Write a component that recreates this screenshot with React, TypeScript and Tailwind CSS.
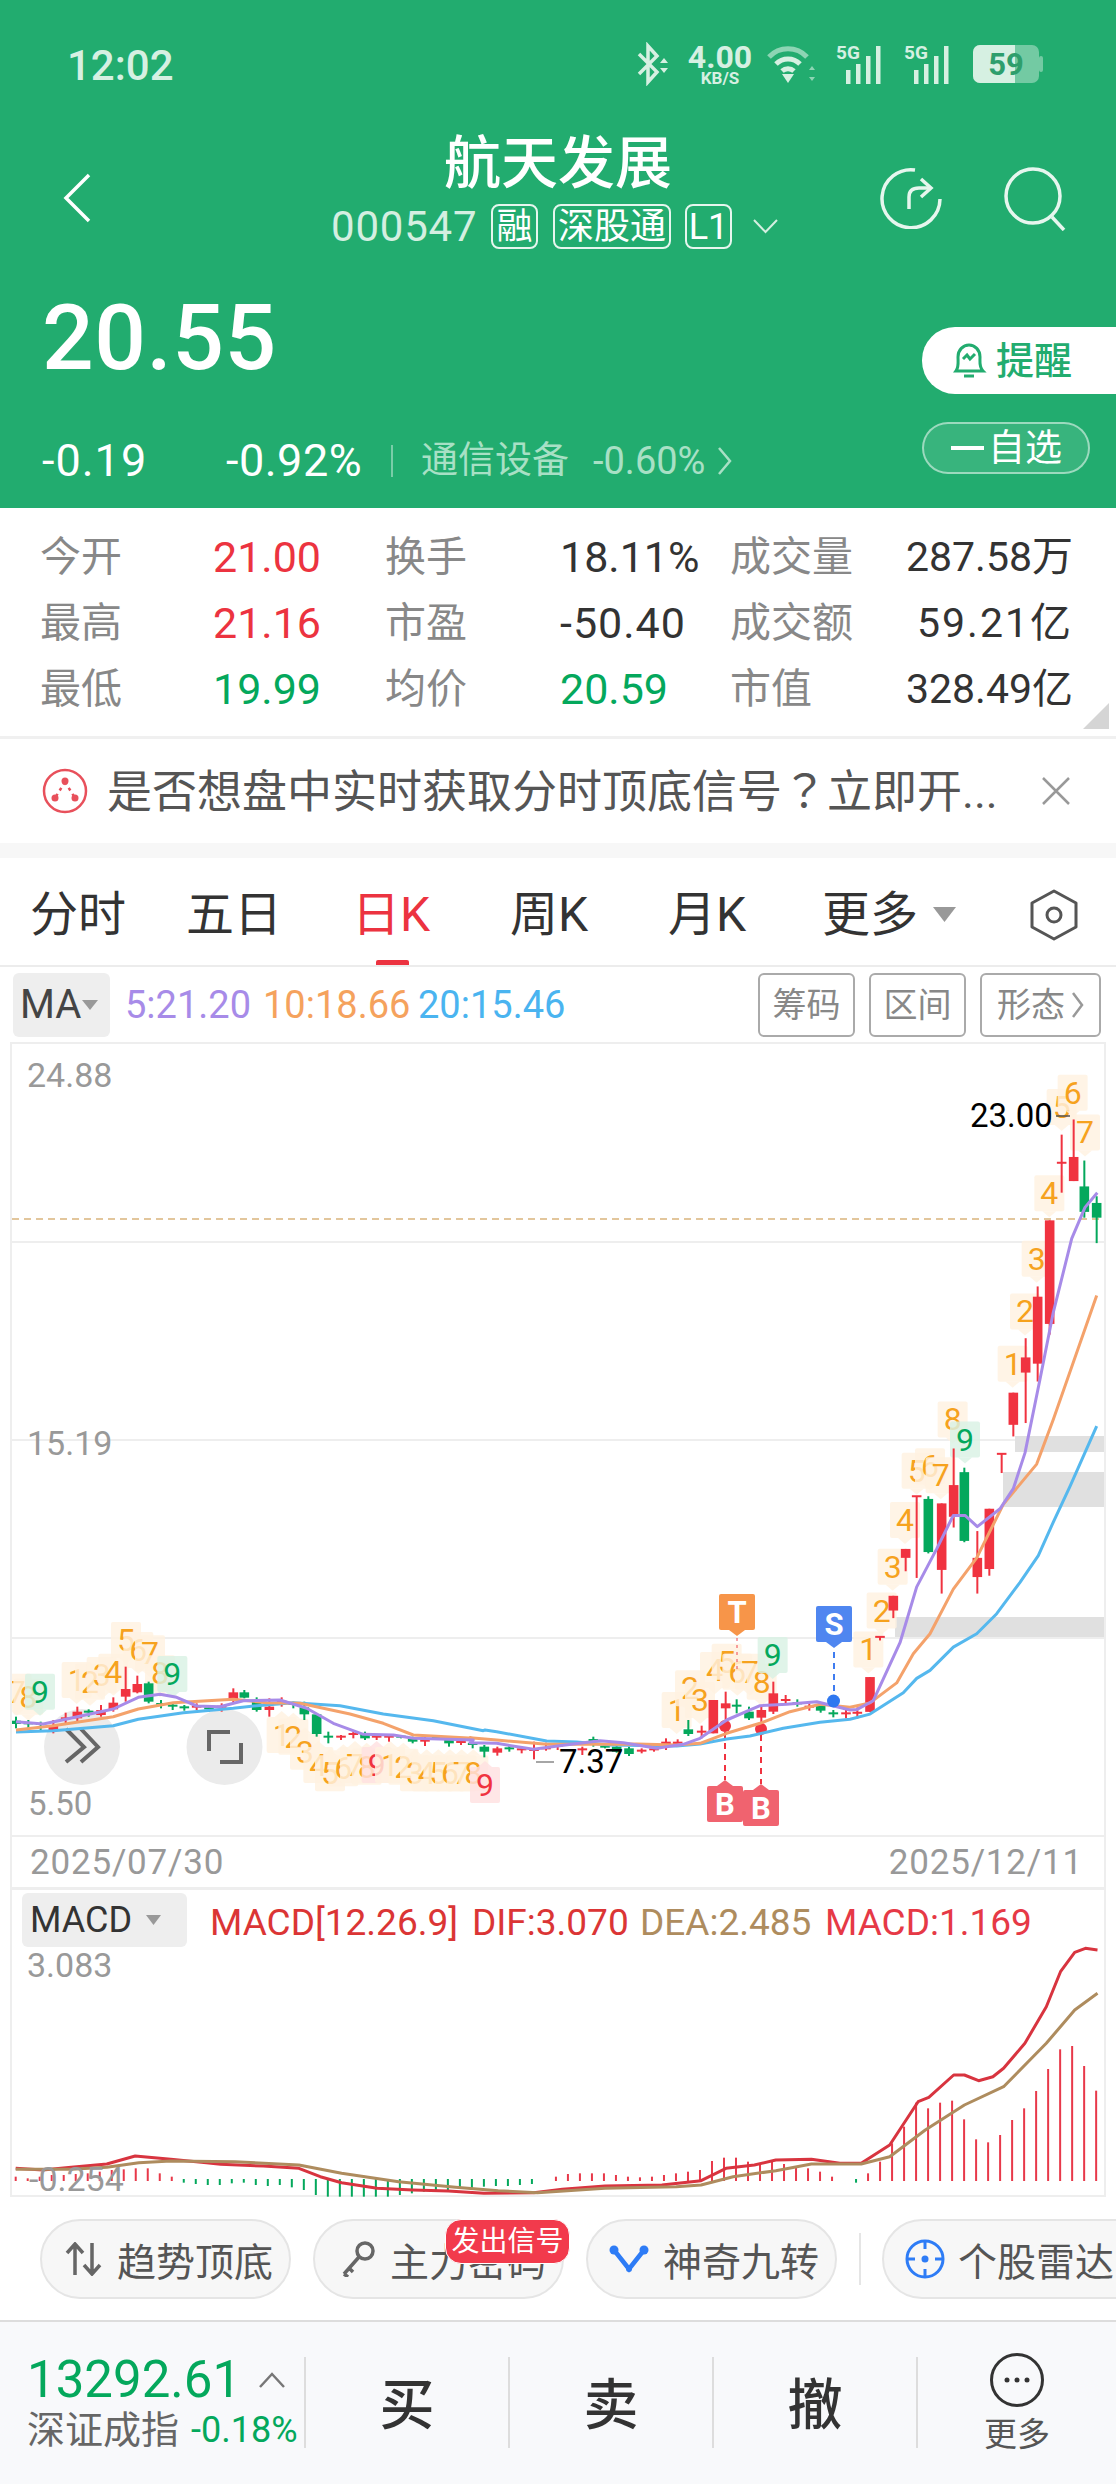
import React from "react";

// page-coordinate helpers, the chart data was read off zoomed crops
const z3 = (x: number, y: number) => [700 + x / 3, 1040 + y / 2.24];
const z4 = (x: number, y: number) => [x / 3, 1560 + y / 3];
const z5 = (x: number, y: number) => [450 + x / 3, 1560 + y / 3];
const z6 = (x: number, y: number) => [x / 1.405, 1860 + y / 3];

type Conv = (x: number, y: number) => number[];
type Candle = [number, number, number, number, number, "r" | "g"];

const RED = "#F03340";
const GREEN = "#04A85C";

const candles4: Candle[] = [
  [48, 482, 492, 470, 505, "g"], [85, 490, 490, 480, 505, "g"], [122, 492, 492, 485, 510, "g"],
  [160, 496, 510, 480, 520, "r"], [197, 475, 475, 458, 490, "r"], [232, 455, 475, 440, 485, "r"],
  [266, 455, 455, 448, 470, "g"], [303, 450, 465, 435, 470, "r"], [340, 428, 448, 412, 455, "r"],
  [377, 387, 410, 320, 425, "r"], [412, 372, 397, 347, 400, "r"], [446, 370, 425, 365, 430, "g"],
  [483, 432, 432, 420, 445, "g"], [518, 437, 437, 430, 450, "g"], [553, 442, 442, 435, 452, "g"],
  [590, 440, 440, 430, 450, "r"], [627, 445, 445, 435, 455, "g"], [665, 440, 440, 430, 455, "r"],
  [700, 397, 420, 385, 430, "r"], [733, 397, 413, 390, 415, "g"], [770, 425, 450, 412, 455, "g"],
  [808, 440, 450, 415, 470, "r"], [845, 425, 425, 412, 440, "r"], [880, 432, 432, 425, 445, "g"],
  [913, 442, 463, 425, 480, "g"], [950, 463, 522, 460, 530, "g"], [985, 530, 530, 515, 550, "g"],
  [1023, 530, 530, 525, 540, "r"], [1060, 522, 522, 515, 535, "r"], [1095, 520, 535, 515, 540, "g"],
  [1130, 530, 535, 525, 540, "r"], [1167, 530, 535, 525, 545, "r"], [1203, 530, 530, 525, 535, "g"],
  [1238, 535, 545, 530, 550, "g"], [1275, 538, 545, 530, 558, "r"], [1310, 532, 532, 528, 538, "g"],
  [1347, 540, 550, 535, 560, "g"], [1383, 546, 546, 535, 555, "r"], [1418, 552, 552, 545, 565, "g"],
];

const candles5: Candle[] = [
  [103, 560, 575, 555, 592, "g"], [142, 565, 578, 560, 587, "r"], [178, 565, 565, 558, 575, "g"],
  [215, 568, 568, 560, 580, "r"], [252, 570, 570, 545, 598, "r"], [288, 565, 570, 548, 572, "r"],
  [323, 558, 558, 550, 570, "r"], [397, 568, 568, 560, 585, "r"], [430, 540, 540, 530, 560, "g"],
  [465, 560, 560, 555, 565, "g"], [500, 560, 575, 558, 578, "g"], [537, 565, 582, 560, 588, "g"],
  [575, 572, 572, 565, 580, "r"], [612, 568, 568, 560, 575, "r"], [648, 545, 555, 535, 570, "r"],
  [683, 545, 552, 538, 560, "r"], [715, 508, 522, 480, 528, "g"], [755, 515, 515, 497, 535, "r"],
  [790, 420, 520, 420, 520, "r"], [827, 430, 445, 395, 490, "r"], [860, 437, 437, 418, 460, "g"],
  [897, 455, 475, 440, 480, "g"], [934, 450, 473, 440, 520, "r"], [970, 400, 455, 365, 462, "r"],
  [1007, 420, 420, 405, 435, "r"], [1042, 430, 430, 418, 440, "g"], [1078, 440, 440, 430, 452, "r"],
  [1112, 438, 452, 428, 458, "g"], [1150, 460, 460, 450, 472, "g"], [1188, 460, 460, 445, 475, "r"],
];

const candles3: Candle[] = [
  [472, 1507, 1507, 1495, 1520, "r"], [510, 1427, 1505, 1427, 1505, "r"], [540, 1337, 1337, 1337, 1345, "r"],
  [580, 1245, 1278, 1245, 1295, "r"], [617, 1140, 1160, 1140, 1190, "r"], [650, 1022, 1022, 1022, 1205, "r"],
  [685, 1028, 1147, 1022, 1150, "g"], [725, 1038, 1187, 1038, 1240, "r"], [761, 997, 1068, 915, 1092, "r"],
  [793, 968, 1122, 958, 1125, "g"], [832, 1160, 1203, 1100, 1240, "r"], [868, 1050, 1185, 1050, 1200, "r"],
  [905, 927, 927, 927, 970, "r"], [940, 790, 862, 790, 888, "r"], [977, 711, 745, 668, 858, "r"],
  [1013, 575, 725, 552, 765, "r"], [1049, 404, 636, 404, 660, "r"], [1085, 275, 275, 212, 342, "r"],
  [1121, 262, 316, 178, 316, "r"], [1153, 328, 385, 270, 398, "g"], [1190, 365, 398, 350, 455, "g"],
];

const toPoints = (list: number[][], conv: Conv) =>
  list.map(([x, y]) => conv(x, y).map((v) => v.toFixed(1)).join(",")).join(" ");

const blue =
  toPoints([[48, 516], [160, 512], [340, 497], [415, 478], [550, 458], [700, 445], [770, 437], [880, 428], [1020, 437], [1150, 462], [1300, 482], [1450, 512]], z4) + " " +
  toPoints([[105, 510], [140, 515], [290, 543], [380, 546], [480, 555], [680, 558], [750, 552], [830, 537], [900, 528], [1000, 505], [1110, 487], [1200, 478]], z5) + " " +
  toPoints([[510, 1510], [610, 1462], [650, 1430], [690, 1412], [760, 1360], [830, 1330], [890, 1285], [960, 1215], [1015, 1155], [1060, 1080], [1110, 1000], [1190, 865]], z3);

const orange =
  toPoints([[48, 510], [160, 497], [340, 470], [415, 447], [520, 428], [700, 418], [800, 428], [900, 430], [1050, 462], [1150, 490], [1240, 525], [1420, 535]], z4) + " " +
  toPoints([[60, 533], [140, 540], [290, 553], [430, 553], [560, 552], [680, 555], [750, 550], [830, 520], [930, 490], [1020, 455], [1110, 433], [1200, 442]], z5) + " " +
  toPoints([[510, 1485], [590, 1440], [640, 1375], [690, 1330], [760, 1230], [830, 1160], [910, 1040], [1010, 950], [1060, 850], [1190, 572]], z3);

const purple =
  toPoints([[48, 485], [130, 492], [232, 470], [340, 447], [415, 412], [480, 403], [530, 412], [590, 438], [660, 440], [730, 422], [840, 420], [920, 445], [1000, 490], [1090, 523], [1180, 525], [1240, 535], [1420, 540]], z4) + " " +
  toPoints([[60, 548], [140, 550], [250, 568], [340, 556], [450, 542], [520, 548], [620, 565], [700, 553], [750, 535], [830, 480], [930, 437], [1010, 433], [1100, 425], [1200, 450]], z5) + " " +
  toPoints([[470, 1500], [520, 1480], [600, 1350], [650, 1225], [710, 1140], [760, 1065], [795, 1065], [832, 1090], [900, 1050], [940, 1005], [975, 925], [1020, 760], [1060, 610], [1115, 445], [1155, 375], [1192, 342]], z3);

const dif = toPoints([[22, 925], [60, 930], [100, 922], [150, 912], [190, 888], [240, 898], [290, 908], [310, 913], [370, 918], [420, 925], [450, 950], [480, 968], [530, 985], [580, 990], [630, 993], [680, 1000], [750, 998], [790, 988], [850, 978], [930, 975], [985, 962], [1020, 925], [1060, 915], [1090, 900], [1140, 898], [1180, 910], [1210, 910], [1250, 855], [1290, 725], [1305, 712], [1340, 645], [1355, 645], [1375, 662], [1395, 650], [1410, 625], [1440, 550], [1470, 440], [1490, 335], [1510, 277], [1525, 265], [1542, 270]], z6);
const dea = toPoints([[22, 928], [100, 928], [150, 922], [195, 908], [240, 903], [330, 905], [420, 915], [480, 940], [560, 965], [640, 982], [700, 992], [755, 998], [850, 985], [950, 980], [985, 975], [1030, 950], [1090, 932], [1140, 912], [1210, 912], [1250, 890], [1300, 810], [1355, 735], [1410, 680], [1470, 550], [1510, 450], [1542, 400]], z6);

// macd bars by index, values are the free end of each bar in crop pixels
const redBars: [number, number][] = [
  ...[950, 955, 950, 945, 945, 942, 940, 935, 930, 928, 925, 925, 940, 950].map((t, i) => [i, t] as [number, number]),
  ...[950, 942, 940, 940, 940, 945, 950, 952, 950, 945, 940, 935, 930, 903, 893, 893, 905, 915, 905, 912, 920, 925, 935, 950].map((t, i) => [i + 45, t] as [number, number]),
  ...[940, 905, 850, 800, 728, 745, 728, 722, 778, 838, 847, 825, 780, 745, 693, 627, 568, 558, 618, 692].map((t, i) => [i + 71, t] as [number, number]),
];
const greenBars: [number, number][] = [
  ...[968, 972, 975, 975, 970, 968, 975, 978, 975, 982, 990, 1005, 1010, 1010, 1010, 1010, 1010, 1010, 1005, 1000, 995, 990, 990, 985, 985, 980, 978, 978, 975, 972].map((b, i) => [i + 14, b] as [number, number]),
  [70, 968],
];

// sequence tiles stack translucently, so older digits fade under newer ones
type Td = [number, number, number];
const tdUp4: Td[] = [
  [7, 50, 395], [8, 85, 410], [1, 230, 360], [2, 270, 365], [3, 305, 345], [4, 340, 335],
  [5, 378, 240], [6, 415, 270], [7, 450, 280], [8, 480, 340],
];
const tdDown4: Td[] = [
  [1, 845, 525], [2, 880, 530], [3, 915, 575], [4, 955, 615], [5, 990, 640], [6, 1030, 625],
  [7, 1065, 615], [8, 1100, 620], [1, 1170, 615], [2, 1210, 620], [3, 1245, 640], [4, 1280, 640],
  [5, 1315, 640], [6, 1350, 640], [7, 1385, 640], [8, 1420, 640],
];
const tdUp5: Td[] = [
  [1, 680, 450], [2, 720, 385], [3, 750, 420], [4, 795, 330], [5, 830, 305], [6, 862, 335], [7, 900, 335], [8, 935, 365],
];
const tdUp3: Td[] = [
  [1, 505, 1365], [2, 545, 1278], [3, 578, 1180], [4, 615, 1075], [5, 650, 965], [6, 690, 955], [7, 722, 975],
  [8, 758, 850], [1, 938, 725], [2, 975, 608], [3, 1010, 490], [4, 1048, 343], [5, 1085, 150], [6, 1118, 118], [7, 1155, 207],
];

function Tile({ n, x, y, fill, color, below }: { n: number; x: number; y: number; fill: string; color: string; below?: boolean }) {
  const notch = below
    ? `M${x - 7} ${y - 18} L${x} ${y - 24} L${x + 7} ${y - 18} Z`
    : `M${x - 7} ${y + 18} L${x} ${y + 24} L${x + 7} ${y + 18} Z`;
  return (
    <g>
      <rect x={x - 15} y={y - 18} width={30} height={36} rx={2} fill={fill} fillOpacity={0.82} />
      <path d={notch} fill={fill} fillOpacity={0.82} />
      <text x={x} y={y + 11} textAnchor="middle" fontSize={32} fill={color}>{n}</text>
    </g>
  );
}

function Tiles({ list, conv, below }: { list: Td[]; conv: Conv; below?: boolean }) {
  return (
    <>
      {list.map(([n, zx, zy], i) => {
        const [x, y] = conv(zx, zy);
        return <Tile key={i} n={n} x={x} y={y} fill="#FFF1E0" color="#F6A21E" below={below} />;
      })}
    </>
  );
}

function Candles({ list, conv }: { list: Candle[]; conv: Conv }) {
  return (
    <>
      {list.map(([zx, t, b, wt, wb, c], i) => {
        const [x, top] = conv(zx, t);
        const [, bot] = conv(zx, b);
        const [, wTop] = conv(zx, wt);
        const [, wBot] = conv(zx, wb);
        const color = c === "r" ? RED : GREEN;
        return (
          <g key={i}>
            <rect x={x - 1} y={wTop} width={2} height={wBot - wTop} fill={color} />
            <rect x={x - 4.8} y={top - (bot - top < 2 ? 1 : 0)} width={9.6} height={Math.max(bot - top, 2)} fill={color} />
          </g>
        );
      })}
    </>
  );
}

function Marker({ label, x, y, color, up }: { label: string; x: number; y: number; color: string; up?: boolean }) {
  const notch = up
    ? `M${x - 8} ${y - 18} L${x} ${y - 24} L${x + 8} ${y - 18} Z`
    : `M${x - 8} ${y + 18} L${x} ${y + 24} L${x + 8} ${y + 18} Z`;
  return (
    <g>
      <rect x={x - 18} y={y - 18} width={36} height={36} rx={2} fill={color} />
      <path d={notch} fill={color} />
      <text x={x} y={y + 11} textAnchor="middle" fontSize={31} fontWeight={700} fill="#fff">{label}</text>
    </g>
  );
}

function MainChart() {
  return (
    <svg width={1092} height={791} viewBox="12 1044 1092 791" className="block">
      {[1242, 1440, 1638].map((y) => (
        <line key={y} x1={12} x2={1104} y1={y} y2={y} stroke="#EEEEEE" strokeWidth={2} />
      ))}
      <rect x={1015} y={1436} width={89} height={16} fill="#E0E0E0" />
      <rect x={1003} y={1472} width={101} height={35} fill="#E0E0E0" />
      <rect x={895} y={1617} width={209} height={20} fill="#E0E0E0" />
      <line x1={12} x2={1104} y1={1219} y2={1219} stroke="#D9B47C" strokeWidth={1.5} strokeDasharray="7 5" />

      <text x={27} y={1087} fontSize={34} fill="#999">24.88</text>
      <text x={27} y={1455} fontSize={34} fill="#999">15.19</text>
      <text x={28} y={1815} fontSize={33} fill="#999">5.50</text>

      <circle cx={82} cy={1747} r={38} fill="#EBEBEB" />
      <path d="M66 1729 L84 1747 L66 1762 M81 1729 L98 1747 L81 1762" fill="none" stroke="#666" strokeWidth={4} />
      <circle cx={224.5} cy={1747} r={38} fill="#EBEBEB" />
      <path d="M209 1751 V1732 H230 M241 1743 V1762 H220" fill="none" stroke="#666" strokeWidth={4} />

      <Tiles list={tdUp4} conv={z4} />
      <Tile n={9} x={z4(120, 395)[0]} y={z4(120, 395)[1]} fill="#D9F2E4" color={GREEN} />
      <Tile n={9} x={z4(517, 342)[0]} y={z4(517, 342)[1]} fill="#D9F2E4" color={GREEN} />
      <Tiles list={tdDown4.slice(0, 8)} conv={z4} below />
      <Tile n={9} x={z4(1130, 615)[0]} y={z4(1130, 615)[1]} fill="#FFE0E1" color={RED} below />
      <Tiles list={tdDown4.slice(8)} conv={z4} below />
      <Tile n={9} x={z4(1455, 675)[0]} y={z4(1455, 675)[1]} fill="#FFE0E1" color={RED} below />
      <Tiles list={tdUp5} conv={z5} />
      <Tile n={9} x={z5(968, 285)[0]} y={z5(968, 285)[1]} fill="#D9F2E4" color={GREEN} />
      <Tiles list={tdUp3} conv={z3} />
      <Tile n={9} x={z3(795, 895)[0]} y={z3(795, 895)[1]} fill="#D9F2E4" color={GREEN} />

      <Candles list={candles4} conv={z4} />
      <Candles list={candles5} conv={z5} />
      <Candles list={candles3} conv={z3} />

      <line x1={737} x2={737} y1={1638} y2={1670} stroke={RED} strokeWidth={1.5} strokeDasharray="3 4" opacity={0.6} />
      <line x1={834} x2={834} y1={1652} y2={1692} stroke="#3F7CF0" strokeWidth={2} strokeDasharray="6 5" />
      <line x1={725} x2={725} y1={1732} y2={1780} stroke={RED} strokeWidth={2} strokeDasharray="6 5" />
      <line x1={761} x2={761} y1={1735} y2={1784} stroke={RED} strokeWidth={2} strokeDasharray="6 5" />
      <circle cx={725} cy={1726} r={6} fill={RED} />
      <circle cx={761} cy={1729} r={6} fill={RED} />

      <polyline points={blue} fill="none" stroke="#55B8EE" strokeWidth={3} strokeLinejoin="round" />
      <polyline points={orange} fill="none" stroke="#F4A26B" strokeWidth={3} strokeLinejoin="round" />
      <polyline points={purple} fill="none" stroke="#A78BE8" strokeWidth={3} strokeLinejoin="round" />
      <circle cx={833.5} cy={1701} r={6.5} fill="#2F78F0" />

      <Marker label="T" x={737} y={1612} color="#F79549" />
      <Marker label="S" x={834} y={1624} color="#4F86F0" />
      <Marker label="B" x={725} y={1804} color="#F0636F" up />
      <Marker label="B" x={761} y={1808} color="#F0636F" up />

      <line x1={536} x2={554} y1={1762} y2={1762} stroke="#888" strokeWidth={1.5} />
      <text x={559} y={1773} fontSize={33} fill="#000">7.37</text>
      <text x={970} y={1127} fontSize={33} fill="#000">23.00</text>
      <line x1={1056} x2={1070} y1={1116} y2={1116} stroke="#555" strokeWidth={1.5} />
    </svg>
  );
}

function MacdChart() {
  return (
    <svg width={1092} height={245} viewBox="12 1950 1092 245" className="block overflow-visible">
      {redBars.map(([i, t]) => {
        const x = 15.7 + 12.005 * i;
        const y = z6(0, t)[1];
        return <rect key={i} x={x - 1} y={y} width={2} height={2181 - y} fill="#E8394A" />;
      })}
      {greenBars.map(([i, b]) => {
        const x = 15.7 + 12.005 * i;
        const y = z6(0, b)[1];
        return <rect key={i} x={x - 1} y={2179} width={2} height={y - 2179} fill={GREEN} />;
      })}
      <polyline points={dif} fill="none" stroke="#D8343F" strokeWidth={3} strokeLinejoin="round" />
      <polyline points={dea} fill="none" stroke="#AE8C5E" strokeWidth={3} strokeLinejoin="round" />
      <text x={27} y={1977} fontSize={34} fill="#999">3.083</text>
      <text x={29} y={2191} fontSize={34} fill="#999">-0.254</text>
    </svg>
  );
}

function Signal5G() {
  return (
    <svg width={52} height={40} viewBox="0 0 52 40">
      <text x={0} y={15} fontSize={19} fontWeight={700} fill="#D6F0E2">5G</text>
      <rect x={10} y={26} width={4.5} height={14} fill="#D6F0E2" />
      <rect x={20} y={20} width={4.5} height={20} fill="#D6F0E2" />
      <rect x={30} y={12} width={4.5} height={28} fill="#D6F0E2" />
      <rect x={40} y={2} width={4.5} height={38} fill="#D6F0E2" />
    </svg>
  );
}

function StatusBar() {
  return (
    <div className="h-[126px] pl-[67px] pr-[73px] flex items-center">
      <span className="mt-[6px] text-[42px] leading-[50px] font-medium text-[#D6F0E2]">12:02</span>
      <div className="ml-auto mt-[2px] flex items-center">
        <svg width={34} height={44} viewBox="0 0 34 44" fill="none" stroke="#D6F0E2" strokeWidth={3.5}>
          <path d="M2 12 L20 30 L11 40 V4 L20 14 L2 32" />
          <path d="M27 16 L31 21 H23 Z M27 31 L31 26 H23 Z" fill="#D6F0E2" strokeWidth={0} />
        </svg>
        <div className="ml-[17px] w-[64px] flex flex-col items-center text-[#D6F0E2]">
          <span className="text-[32px] leading-[28px] font-bold">4.00</span>
          <span className="text-[17px] leading-[14px] font-bold">KB/S</span>
        </div>
        <svg className="ml-[14px]" width={50} height={40} viewBox="0 0 50 40" fill="none" stroke="#D6F0E2">
          <path d="M3 13 A26 26 0 0 1 41 13" strokeWidth={5} opacity={0.6} />
          <path d="M10 20 A17 17 0 0 1 34 20" strokeWidth={5} />
          <path d="M16 27 A9 9 0 0 1 28 27" strokeWidth={5} />
          <path d="M16 30 L22 39 L28 30 Z" fill="#D6F0E2" strokeWidth={0} />
          <path d="M46 22 L49 26 H43 Z M46 37 L49 33 H43 Z" fill="#D6F0E2" strokeWidth={0} opacity={0.6} />
        </svg>
        <div className="ml-[20px]"><Signal5G /></div>
        <div className="ml-[16px]"><Signal5G /></div>
        <svg className="ml-[17px]" width={70} height={38} viewBox="0 0 70 38">
          <rect x={0} y={0} width={66} height={38} rx={7} fill="#D6F0E2" opacity={0.45} />
          <path d="M7 0 H42 V38 H7 A7 7 0 0 1 0 31 V7 A7 7 0 0 1 7 0 Z" fill="#D6F0E2" />
          <rect x={66} y={11} width={4} height={16} rx={2} fill="#D6F0E2" opacity={0.45} />
          <text x={33} y={30} textAnchor="middle" fontSize={31} fontWeight={700} fill="#2E9E6C">59</text>
        </svg>
      </div>
    </div>
  );
}

function Tag({ className, children }: { className: string; children: React.ReactNode }) {
  return (
    <span className={`h-[45px] border-2 border-[#E6F6EE] rounded-[8px] flex items-center justify-center text-[36px] leading-none text-white ${className}`}>
      {children}
    </span>
  );
}

function Header() {
  return (
    <div className="h-[508px] bg-[#22AC6F] flex flex-col shrink-0">
      <StatusBar />
      <div className="h-[128px] flex">
        <div className="w-[260px] pl-[63px] pt-[47px]">
          <svg width={28} height={50} viewBox="0 0 28 50" fill="none" stroke="#fff" strokeWidth={3.5}>
            <path d="M26 2 L3 25 L26 48" />
          </svg>
        </div>
        <div className="w-[596px] flex flex-col items-center pt-[6px]">
          <div className="h-[64px] text-[57px] leading-[64px] text-white font-medium">航天发展</div>
          <div className="mt-[8px] w-full pl-[71px] flex items-center text-[#D4EFE1]">
            <span className="w-[160px] text-[42px] leading-[45px] tracking-[0.8px]">000547</span>
            <Tag className="w-[47px]">融</Tag>
            <Tag className="ml-[15px] w-[118px]">深股通</Tag>
            <Tag className="ml-[14px] w-[47px] text-[34px]">L1</Tag>
            <svg className="ml-[21px]" width={25} height={15} viewBox="0 0 25 15" fill="none" stroke="#D4EFE1" strokeWidth={2}>
              <path d="M1 1 L12.5 13 L24 1" />
            </svg>
          </div>
        </div>
        <div className="w-[260px] pl-[23px] pt-[41px] flex gap-[60px]">
          <svg width={64} height={62} viewBox="0 0 64 62" fill="none" stroke="#E6F6EE" strokeWidth={3.5}>
            <path d="M36 3 A29 29 0 1 0 61 32" />
            <path d="M30 42 V30 Q30 21 40 21 H50" />
            <path d="M42 12 L52 21 L42 30" />
          </svg>
          <svg width={64} height={64} viewBox="0 0 64 64" fill="none" stroke="#E6F6EE" strokeWidth={3.5}>
            <circle cx={30} cy={29} r={27} />
            <path d="M49 50 L61 63" />
          </svg>
        </div>
      </div>
      <div className="flex-1 flex">
        <div className="flex-1 pl-[42px] pt-[34px]">
          <div className="text-[91px] leading-[100px] font-medium text-white tracking-[0.5px]">20.55</div>
          <div className="mt-[51px] h-[44px] flex items-center">
            <span className="w-[184px] text-[45px] leading-[44px] tracking-[1px] text-white">-0.19</span>
            <span className="w-[165px] text-[45px] leading-[44px] tracking-[0.5px] text-white">-0.92%</span>
            <span className="w-[2px] h-[32px] bg-white/40" />
            <span className="ml-[28px] w-[172px] text-[37px] leading-[44px] text-[#A8E0C5]">通信设备</span>
            <span className="w-[126px] text-[38px] leading-[44px] text-[#A8E0C5]">-0.60%</span>
            <svg className="ml-[-2px]" width={15} height={30} viewBox="0 0 15 30" fill="none" stroke="#A8E0C5" strokeWidth={2.5}>
              <path d="M2 2 L13 15 L2 28" />
            </svg>
          </div>
        </div>
        <div className="w-[194px] pt-[73px] flex flex-col">
          <div className="h-[67px] bg-white rounded-l-[33px] pl-[28px] flex items-center text-[#22AC6F]">
            <svg width={38} height={38} viewBox="0 0 38 38" fill="none" stroke="#22AC6F" strokeWidth={3}>
              <path d="M6 29 C9 25 8 20 8 15 C8 8 13 3 19 3 C25 3 30 8 30 15 C30 20 29 25 33 29 Z" />
              <path d="M13 17 L17 13 L20 17 L25 12" />
              <path d="M14 34 H24" />
            </svg>
            <span className="ml-[8px] text-[38px] leading-none font-medium">提醒</span>
          </div>
          <div className="mt-[28px] h-[52px] w-[168px] rounded-[26px] border-2 border-white/50 bg-white/10 pl-[27px] flex items-center text-white">
            <span className="w-[33px] h-[4px] bg-white" />
            <span className="ml-[4px] text-[37px] leading-none">自选</span>
          </div>
        </div>
      </div>
    </div>
  );
}

const statRows = [
  [["今开", ""], ["21.00", "text-[#EC3340]"], ["换手", ""], ["18.11%", "text-[#333]"], ["成交量", ""], ["287.58万", ""]],
  [["最高", ""], ["21.16", "text-[#EC3340]"], ["市盈", ""], ["-50.40", "text-[#333] tracking-[1px]"], ["成交额", ""], ["59.21亿", "tracking-[2px]"]],
  [["最低", ""], ["19.99", "text-[#04A85C]"], ["均价", ""], ["20.59", "text-[#04A85C]"], ["市值", ""], ["328.49亿", ""]],
];

function Stats() {
  return (
    <div className="relative h-[231px] pt-[16px] pl-[40px] border-b-[3px] border-[#F0F0F0] shrink-0">
      {statRows.map((row) => (
        <div key={row[0][0]} className="h-[66px] grid grid-cols-[173px_172px_175px_170px_123px_220px] items-center leading-[66px]">
          <span className="text-[41px] text-[#888]">{row[0][0]}</span>
          <span className={`text-[43px] ${row[1][1]}`}>{row[1][0]}</span>
          <span className="text-[41px] text-[#888]">{row[2][0]}</span>
          <span className={`text-[43px] ${row[3][1]}`}>{row[3][0]}</span>
          <span className="text-[41px] text-[#888] whitespace-nowrap">{row[4][0]}</span>
          <span className={`text-[41px] text-right text-[#333] whitespace-nowrap ${row[5][1]}`}>{row[5][0]}</span>
        </div>
      ))}
      <svg className="absolute right-[7px] bottom-[7px]" width={26} height={26} viewBox="0 0 26 26">
        <path d="M26 0 V26 H0 Z" fill="#D5D5D5" />
      </svg>
    </div>
  );
}

function Banner() {
  return (
    <div className="h-[104px] pl-[42px] flex items-center shrink-0">
      <svg width={46} height={46} viewBox="0 0 46 46" fill="none" stroke="#E8505B" strokeWidth={2.5}>
        <circle cx={23} cy={23} r={21} />
        <path d="M23 14 L13 30 M23 14 L33 30" strokeDasharray="3 4" />
        <circle cx={23} cy={13} r={3.5} fill="#E8505B" stroke="none" />
        <circle cx={13} cy={30} r={3.5} fill="#E8505B" stroke="none" />
        <circle cx={33} cy={30} r={3.5} fill="#E8505B" stroke="none" />
      </svg>
      <span className="ml-[19px] w-[934px] text-[45px] leading-[60px] text-[#555] whitespace-nowrap">是否想盘中实时获取分时顶底信号<span className="font-['Noto_Sans_CJK_TC']">？</span>立即开...</span>
      <svg width={30} height={30} viewBox="0 0 30 30" fill="none" stroke="#999" strokeWidth={2.5}>
        <path d="M2 2 L28 28 M28 2 L2 28" />
      </svg>
    </div>
  );
}

function Tabs() {
  return (
    <div className="h-[109px] border-b-2 border-[#ECECEC] pl-[30px] pt-[6px] flex items-center text-[48px] leading-[60px] text-[#333] shrink-0">
      <span className="w-[156px]">分时</span>
      <span className="w-[166px]">五日</span>
      <span className="relative w-[158px] h-full flex items-center text-[#EC3340]">
        日K
        <span className="absolute left-[24px] bottom-0 w-[33px] h-[5px] bg-[#EC3340] rounded-t-[2px]" />
      </span>
      <span className="w-[158px]">周K</span>
      <span className="w-[154px]">月K</span>
      <span className="w-[111px]">更多</span>
      <svg width={23} height={15} viewBox="0 0 23 15"><path d="M0 0 H23 L11.5 15 Z" fill="#999" /></svg>
      <svg className="ml-[74px]" width={48} height={52} viewBox="0 0 48 52" fill="none" stroke="#555" strokeWidth={3}>
        <path d="M24 2 L46 14 V38 L24 50 L2 38 V14 Z" strokeLinejoin="round" />
        <circle cx={24} cy={26} r={7} />
      </svg>
    </div>
  );
}

function MaRow() {
  return (
    <div className="h-[75px] pl-[13px] pt-[6px] flex items-start shrink-0">
      <div className="w-[97px] h-[64px] bg-[#EEE] rounded-[6px] pl-[7px] flex items-center text-[40px] leading-none text-[#444]">
        MA
        <svg className="ml-[1px]" width={16} height={10} viewBox="0 0 16 10"><path d="M0 0 H16 L8 10 Z" fill="#999" /></svg>
      </div>
      <div className="ml-[15px] h-[64px] flex items-center text-[38px] leading-none">
        <span className="w-[138px] text-[#A78BE8]">5:21.20</span>
        <span className="w-[155px] text-[#F5A25D]">10:18.66</span>
        <span className="text-[#4AB4F0]">20:15.46</span>
      </div>
      <div className="ml-auto pr-[15px] flex gap-[14px] text-[34px] leading-none text-[#888]">
        <span className="w-[97px] h-[64px] border-2 border-[#AAA] rounded-[6px] flex items-center justify-center">筹码</span>
        <span className="w-[97px] h-[64px] border-2 border-[#AAA] rounded-[6px] flex items-center justify-center">区间</span>
        <span className="w-[121px] h-[64px] border-2 border-[#AAA] rounded-[6px] flex items-center justify-center">
          形态
          <svg className="ml-[6px]" width={13} height={28} viewBox="0 0 13 28" fill="none" stroke="#999" strokeWidth={2.5}><path d="M2 2 L11 14 L2 26" /></svg>
        </span>
      </div>
    </div>
  );
}

function ChartBox() {
  return (
    <div className="mx-[10px] border-2 border-[#EEE] shrink-0">
      <MainChart />
      <div className="h-[50px] border-t-2 border-b-[3px] border-[#EEE] box-content pl-[18px] pr-[21px] flex items-center justify-between text-[35px] leading-none tracking-[0.8px] text-[#999]">
        <span>2025/07/30</span>
        <span>2025/12/11</span>
      </div>
      <div className="h-[60px] pl-[10px] flex items-start">
        <div className="w-[165px] h-[54px] mt-[3px] bg-[#EEE] rounded-[6px] pl-[8px] flex items-center text-[36px] leading-none text-[#333]">
          MACD
          <svg className="ml-[14px]" width={15} height={10} viewBox="0 0 15 10"><path d="M0 0 H15 L7.5 10 Z" fill="#999" /></svg>
        </div>
        <div className="ml-[23px] mt-[2px] h-[60px] flex items-center text-[37px] leading-none whitespace-nowrap">
          <span className="w-[262px] text-[#DB3535]">MACD[12.26.9]</span>
          <span className="w-[168px] text-[#DB3535]">DIF:3.070</span>
          <span className="w-[185px] text-[#AE8C5E]">DEA:2.485</span>
          <span className="text-[#E63946]">MACD:1.169</span>
        </div>
      </div>
      <MacdChart />
    </div>
  );
}

function Pill({ className, icon, children }: { className: string; icon: React.ReactNode; children: React.ReactNode }) {
  return (
    <div className={`relative h-[80px] rounded-[40px] border-2 border-[#E5E5E5] bg-[#F7F7F7] flex items-center text-[39px] leading-none text-[#555] whitespace-nowrap shrink-0 ${className}`}>
      {icon}
      {children}
    </div>
  );
}

function Tools() {
  return (
    <div className="h-[123px] pl-[40px] pt-[22px] flex items-start overflow-hidden shrink-0">
      <Pill
        className="w-[251px] pl-[21px]"
        icon={
          <svg className="mr-[13px]" width={41} height={34} viewBox="0 0 41 34" fill="none" stroke="#666" strokeWidth={3.5}>
            <path d="M12 33 V3 M4 11 L12 2 L20 11 M29 1 V31 M21 23 L29 32 L37 23" />
          </svg>
        }
      >
        <span className="mt-[8px]">趋势顶底</span>
      </Pill>
      <Pill
        className="ml-[22px] w-[251px] pl-[26px]"
        icon={
          <svg className="mr-[13px]" width={36} height={36} viewBox="0 0 36 36" fill="none" stroke="#666" strokeWidth={3.5}>
            <circle cx={24} cy={10} r={8} />
            <path d="M18 16 L3 33 M8 27 L12 31 M3 33 L7 36" />
          </svg>
        }
      >
        <span className="mt-[8px]">主力密码</span>
        <span className="absolute left-[130px] top-[-2px] w-[125px] h-[45px] rounded-[16px] border border-white bg-[#F23A4C] flex items-center justify-center text-[28px] leading-none text-white">发出信号</span>
      </Pill>
      <Pill
        className="ml-[22px] w-[251px] pl-[20px]"
        icon={
          <svg className="mr-[13px]" width={42} height={30} viewBox="0 0 42 30" fill="none" stroke="#2E7CF6" strokeWidth={4.5}>
            <path d="M6 6 L21 25 L36 6" />
            <circle cx={6} cy={6} r={4.5} fill="#2E7CF6" stroke="none" />
            <circle cx={36} cy={6} r={4.5} fill="#2E7CF6" stroke="none" />
            <circle cx={21} cy={25} r={3} fill="#2E7CF6" stroke="none" />
          </svg>
        }
      >
        <span className="mt-[8px]">神奇九转</span>
      </Pill>
      <span className="ml-[22px] mt-[14px] w-[2px] h-[52px] bg-[#E5E5E5] shrink-0" />
      <Pill
        className="ml-[21px] w-[280px] pl-[21px]"
        icon={
          <svg className="mr-[13px]" width={40} height={40} viewBox="0 0 40 40" fill="none" stroke="#2E7CF6" strokeWidth={3}>
            <circle cx={20} cy={20} r={18} />
            <path d="M20 1 V10 M20 30 V39 M2 20 H10 M30 20 H38" />
            <circle cx={20} cy={20} r={3.5} fill="#2E7CF6" stroke="none" />
          </svg>
        }
      >
        <span className="mt-[8px]">个股雷达</span>
      </Pill>
    </div>
  );
}

function BottomBar() {
  return (
    <div className="flex-1 border-t-2 border-[#DDD] bg-[#F8F9FB] flex items-start pt-[35px]">
      <div className="w-[304px] pl-[27px] h-[91px] flex flex-col whitespace-nowrap">
        <div className="flex items-center">
          <span className="text-[51px] leading-[46px] text-[#04A85C]">13292.61</span>
          <svg className="ml-[17px]" width={28} height={16} viewBox="0 0 28 16" fill="none" stroke="#777" strokeWidth={2.5}>
            <path d="M2 15 L14 2 L26 15" />
          </svg>
        </div>
        <div className="mt-[7px] flex items-center">
          <span className="text-[38px] leading-[40px] text-[#666]">深证成指</span>
          <span className="ml-[12px] text-[36px] leading-[40px] text-[#04A85C]">-0.18%</span>
        </div>
      </div>
      <div className="w-[204px] h-[91px] pt-[6px] border-l-2 border-[#DDD] flex items-center justify-center text-[55px] leading-none font-medium text-[#333]">买</div>
      <div className="w-[204px] h-[91px] pt-[6px] border-l-2 border-[#DDD] flex items-center justify-center text-[55px] leading-none font-medium text-[#333]">卖</div>
      <div className="w-[204px] h-[91px] pt-[6px] border-l-2 border-[#DDD] flex items-center justify-center text-[55px] leading-none font-medium text-[#333]">撤</div>
      <div className="w-[200px] h-[91px] border-l-2 border-[#DDD] flex flex-col items-center">
        <svg className="mt-[-4px] shrink-0" width={54} height={54} viewBox="0 0 54 54" fill="none" stroke="#333" strokeWidth={3}>
          <circle cx={27} cy={27} r={25.5} />
          <circle cx={17} cy={27} r={2.5} fill="#333" stroke="none" />
          <circle cx={27} cy={27} r={2.5} fill="#333" stroke="none" />
          <circle cx={37} cy={27} r={2.5} fill="#333" stroke="none" />
        </svg>
        <span className="mt-[9px] shrink-0 text-[33px] leading-[38px] text-[#555]">更多</span>
      </div>
    </div>
  );
}

export default function App() {
  return (
    <div className="w-[1116px] h-[2484px] bg-white overflow-hidden flex flex-col font-['Roboto','Noto_Sans_CJK_SC',sans-serif]">
      <Header />
      <Stats />
      <Banner />
      <div className="h-[15px] bg-[#F7F7F7] shrink-0" />
      <Tabs />
      <MaRow />
      <ChartBox />
      <Tools />
      <BottomBar />
    </div>
  );
}
